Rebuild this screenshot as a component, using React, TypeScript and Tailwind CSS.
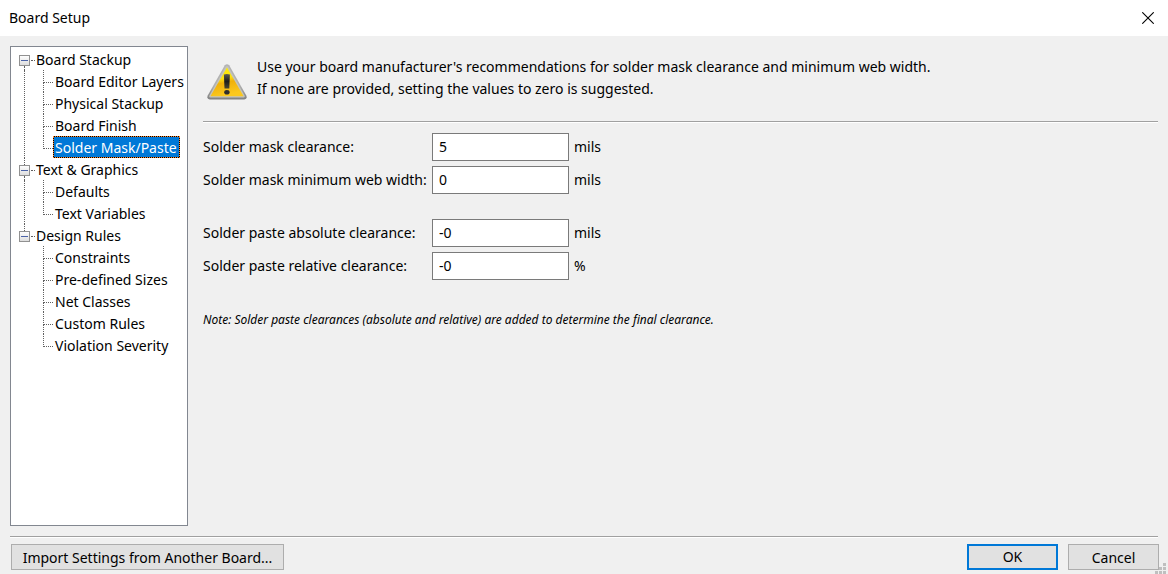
import { useState } from "react";
import type { ReactNode } from "react";

type Group = { title: string; pages: string[] };

const groups: Group[] = [
  {
    title: "Board Stackup",
    pages: ["Board Editor Layers", "Physical Stackup", "Board Finish", "Solder Mask/Paste"],
  },
  { title: "Text & Graphics", pages: ["Defaults", "Text Variables"] },
  {
    title: "Design Rules",
    pages: ["Constraints", "Pre-defined Sizes", "Net Classes", "Custom Rules", "Violation Severity"],
  },
];

function Divider() {
  return <div className="h-[2px] shrink-0 border-b border-white bg-[#a0a0a0]" />;
}

function MinusBox() {
  return (
    <svg width="11" height="11" viewBox="0 0 11 11" shapeRendering="crispEdges" aria-hidden="true">
      <defs>
        <linearGradient id="box-fill" x1="0" y1="0" x2="0" y2="1">
          <stop offset="0" stopColor="#ffffff" />
          <stop offset="1" stopColor="#dcdcdc" />
        </linearGradient>
      </defs>
      <rect x="0.5" y="0.5" width="10" height="10" fill="url(#box-fill)" stroke="#919191" />
      <rect x="2" y="5" width="7" height="1" fill="#4b63a7" />
    </svg>
  );
}

function TreeGroup({
  group,
  first,
  last,
  selected,
  onSelect,
}: {
  group: Group;
  first: boolean;
  last: boolean;
  selected: string;
  onSelect: (page: string) => void;
}) {
  return (
    <li>
      <button type="button" className="flex h-[22px] items-stretch whitespace-nowrap">
        <span className="flex w-[11px] flex-col">
          <span className={first ? "h-[7px]" : "ml-[5px] h-[7px] border-l border-dotted border-[#606060]"} />
          <MinusBox />
          <span className={last ? "h-1" : "ml-[5px] h-1 border-l border-dotted border-[#606060]"} />
        </span>
        <span className="ml-px h-[13px] w-1 border-b border-dotted border-[#606060]" />
        <span className="ml-px leading-[24px]">{group.title}</span>
      </button>
      <ul className={last ? "pl-[24px]" : "ml-[5px] border-l border-dotted border-[#606060] pl-[18px]"}>
        {group.pages.map((page, i) => (
          <li key={page}>
            <button
              type="button"
              onClick={() => onSelect(page)}
              className="flex h-[22px] items-stretch whitespace-nowrap"
            >
              <span className="flex w-[10px] flex-col">
                <span className="h-[13px] border-b border-l border-dotted border-[#606060]" />
                {i < group.pages.length - 1 && (
                  <span className="h-[9px] border-l border-dotted border-[#606060]" />
                )}
              </span>
              {page === selected ? (
                <span className="bg-black">
                  <span className="block h-[22px] border border-dotted border-[#ff8728] bg-[#0078d7] bg-clip-padding pr-[2px] pl-px leading-[22px] text-white">
                    {page}
                  </span>
                </span>
              ) : (
                <span className="px-[2px] leading-[24px]">{page}</span>
              )}
            </button>
          </li>
        ))}
      </ul>
    </li>
  );
}

function WarningIcon() {
  return (
    <svg width="40" height="36" viewBox="0 0 40 36" className="shrink-0" aria-label="Warning" role="img">
      <defs>
        <linearGradient id="warn-rim" x1="0" y1="0" x2="0" y2="1">
          <stop offset="0" stopColor="#b4b4b4" />
          <stop offset="0.6" stopColor="#b0b0b0" />
          <stop offset="1" stopColor="#808080" />
        </linearGradient>
        <linearGradient id="warn-fill" x1="0" y1="0" x2="0.25" y2="1">
          <stop offset="0" stopColor="#fff200" />
          <stop offset="0.45" stopColor="#fbe014" />
          <stop offset="0.6" stopColor="#f0b00a" />
          <stop offset="1" stopColor="#fbc81e" />
        </linearGradient>
        <linearGradient id="warn-mark" x1="0" y1="0" x2="0" y2="1">
          <stop offset="0" stopColor="#5a5a50" />
          <stop offset="0.5" stopColor="#1c1c1c" />
          <stop offset="1" stopColor="#4a4630" />
        </linearGradient>
      </defs>
      <path
        d="M17.8 1.3Q20 -0.8 22.2 1.3L39.3 31.6Q40.6 35 37.3 35.5H2.7Q-0.6 35 0.7 31.6Z"
        fill="url(#warn-rim)"
      />
      <path d="M18.8 2.6Q20 1.3 21.2 2.6L37.8 32Q38 33.4 37 33.5H3Q2 33.4 2.2 32Z" fill="#c4c4bc" />
      <path d="M20 3.4L36.6 32.3H3.4Z" fill="url(#warn-fill)" />
      <path d="M16.9 10.6Q20 9.6 22.9 10.6L22.3 24.5H17.5Z" fill="url(#warn-mark)" />
      <ellipse cx="19.9" cy="28.2" rx="2.7" ry="2.3" fill="#2e2e2e" />
    </svg>
  );
}

function Field({ id, label, value, unit }: { id: string; label: string; value: string; unit: string }) {
  return (
    <div className="flex h-7 items-center">
      <label htmlFor={id} className="w-[229px] shrink-0 whitespace-nowrap">
        {label}
      </label>
      <input
        id={id}
        type="text"
        defaultValue={value}
        className="h-7 w-[137px] border border-[#7a7a7a] bg-white px-[6px] pb-[2px] outline-none"
      />
      <span className="ml-[5px]">{unit}</span>
    </div>
  );
}

function DialogButton({ children, className }: { children: ReactNode; className: string }) {
  return (
    <button type="button" className={`h-[26px] bg-[#e1e1e1] text-center whitespace-nowrap ${className}`}>
      {children}
    </button>
  );
}

export default function App() {
  const [selected, setSelected] = useState("Solder Mask/Paste");

  return (
    <div className="flex min-h-screen flex-col bg-[#f0f0f0] font-['Noto_Sans','Open_Sans',sans-serif] text-[14px] leading-[22px] text-black">
      <header className="flex h-9 shrink-0 items-center justify-between bg-white pr-[14px] pl-[9px]">
        <h1>Board Setup</h1>
        <button type="button" aria-label="Close">
          <svg width="12" height="12" viewBox="0 0 12 12" aria-hidden="true">
            <path d="M0.3 0.3L11.7 11.7M11.7 0.3L0.3 11.7" stroke="#000" strokeWidth="1.1" />
          </svg>
        </button>
      </header>

      <div className="flex flex-1 gap-[15px] px-[10px] pt-[10px] pb-[10px]">
        <nav className="w-[178px] shrink-0 border border-[#828790] bg-white pt-px pl-2">
          <ul>
            {groups.map((group, i) => (
              <TreeGroup
                key={group.title}
                group={group}
                first={i === 0}
                last={i === groups.length - 1}
                selected={selected}
                onSelect={setSelected}
              />
            ))}
          </ul>
        </nav>

        <main className="flex-1 pt-[10px]">
          <div className="flex gap-[10px] pl-1">
            <div className="pt-2">
              <WarningIcon />
            </div>
            <p>
              Use your board manufacturer's recommendations for solder mask clearance and minimum web width.
              <br />
              If none are provided, setting the values to zero is suggested.
            </p>
          </div>
          <div className="pt-[21px]">
            <Divider />
          </div>
          <form className="flex flex-col gap-[25px] pt-[10px]">
            <div className="flex flex-col gap-[5px]">
              <Field id="mask-clearance" label="Solder mask clearance:" value="5" unit="mils" />
              <Field id="mask-web" label="Solder mask minimum web width:" value="0" unit="mils" />
            </div>
            <div className="flex flex-col gap-[5px]">
              <Field id="paste-absolute" label="Solder paste absolute clearance:" value="-0" unit="mils" />
              <Field id="paste-relative" label="Solder paste relative clearance:" value="-0" unit="%" />
            </div>
          </form>
          <p className="pt-[29px] text-[12px] italic">
            Note: Solder paste clearances (absolute and relative) are added to determine the final clearance.
          </p>
        </main>
      </div>

      <footer className="relative shrink-0 pr-[9px] pb-1 pl-[10px]">
        <div className="pr-px">
          <Divider />
        </div>
        <div className="flex items-center pt-[6px] pl-px">
          <DialogButton className="w-[273px] border border-[#adadad] pt-px">
            Import Settings from Another Board...
          </DialogButton>
          <DialogButton className="ml-auto w-[91px] border-2 border-[#0078d7]">OK</DialogButton>
          <DialogButton className="ml-[10px] w-[91px] border border-[#adadad] pt-px">Cancel</DialogButton>
        </div>
        <svg
          width="11"
          height="11"
          viewBox="0 0 11 11"
          className="absolute right-[2px] bottom-0"
          shapeRendering="crispEdges"
          fill="#bfbfbf"
          aria-hidden="true"
        >
          <path d="M8 0h3v3h-3zM8 4h3v3h-3zM4 4h3v3h-3zM8 8h3v3h-3zM4 8h3v3h-3zM0 8h3v3h-3z" />
        </svg>
      </footer>
    </div>
  );
}
